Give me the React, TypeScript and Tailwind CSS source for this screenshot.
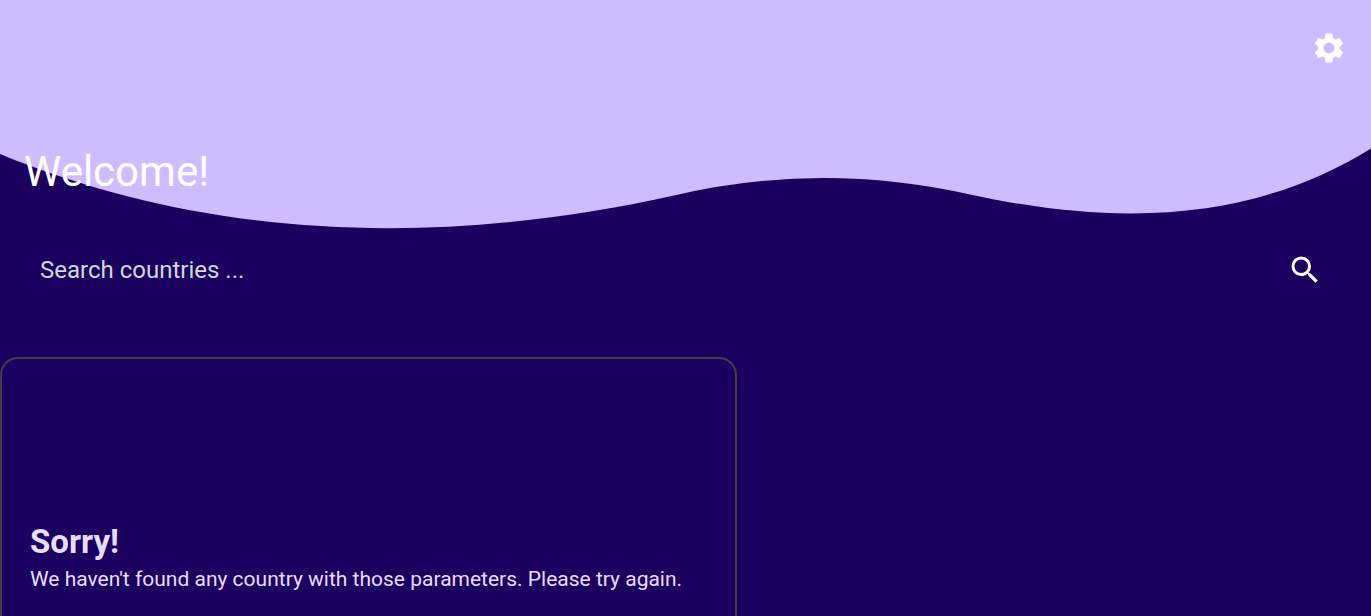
import { MdSearch, MdSettings } from "react-icons/md";

function Wave() {
  return (
    <svg
      className="absolute inset-x-0 top-0 h-[229px] w-full text-[#cfbcff]"
      viewBox="0 0 1371 229"
      preserveAspectRatio="none"
      fill="currentColor"
      aria-hidden="true"
    >
      <path d="M0 0V154C204 238 432 249 674 195.500Q822 161 970 194.500C1134 230 1262 216 1371 148.500V0Z" />
    </svg>
  );
}

function Header() {
  return (
    <header className="relative flex flex-col px-6 pt-[30px]">
      <Wave />
      <button type="button" aria-label="Settings" className="relative self-end text-white">
        <MdSettings className="size-9" />
      </button>
      <h1 className="relative mt-[78px] text-[42px] leading-14 text-white">Welcome!</h1>
    </header>
  );
}

function SearchBar() {
  return (
    <form
      role="search"
      className="mx-6 mt-[30px] flex items-center gap-4 px-4"
      onSubmit={(event) => event.preventDefault()}
    >
      <input
        type="text"
        aria-label="Search countries"
        placeholder="Search countries ..."
        className="h-20 min-w-0 flex-1 bg-transparent text-2xl text-white outline-none placeholder:text-[#cfd8dc]"
      />
      <button type="submit" aria-label="Search" className="mr-2 text-white">
        <MdSearch className="size-9" />
      </button>
    </form>
  );
}

function EmptyState() {
  return (
    <section className="mt-[47px] w-[737px] max-w-full rounded-[18px] border-2 border-[#423e4a] px-7 pt-40 pb-40 text-[#e8ddff]">
      <h2 className="text-[33px] leading-[46px] font-bold">Sorry!</h2>
      <p className="text-[21px] leading-7">
        We haven't found any country with those parameters. Please try again.
      </p>
    </section>
  );
}

export default function App() {
  return (
    <main className="h-screen overflow-hidden bg-[#1b005f] font-[Roboto,sans-serif]">
      <Header />
      <SearchBar />
      <EmptyState />
    </main>
  );
}
